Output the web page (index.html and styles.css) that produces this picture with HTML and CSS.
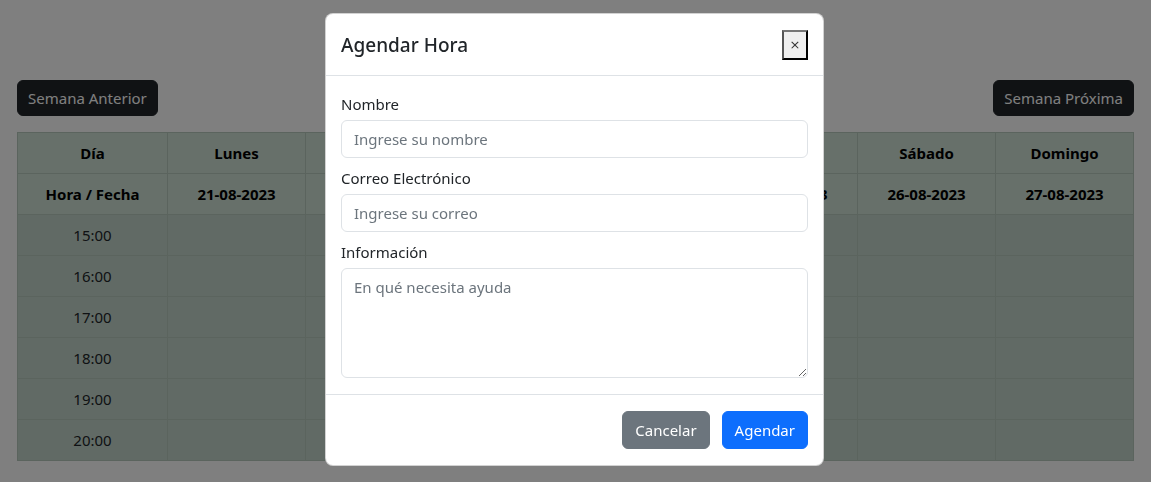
FILE: index.html
```html
<!DOCTYPE html>
<html lang="es">
<head>
<meta charset="utf-8">
<title>Agendar Hora</title>
<link rel="stylesheet" href="styles.css">
</head>
<body>
<div class="page">
  <div class="nav">
    <button class="btn-dark">Semana Anterior</button>
    <button class="btn-dark">Semana Próxima</button>
  </div>
  <table class="agenda">
    <thead>
      <tr><th class="first">Día</th><th>Lunes</th><th>Martes</th><th>Miércoles</th><th>Jueves</th><th>Viernes</th><th>Sábado</th><th>Domingo</th></tr>
      <tr><th class="first">Hora / Fecha</th><th>21-08-2023</th><th>22-08-2023</th><th>23-08-2023</th><th>24-08-2023</th><th>25-08-2023</th><th>26-08-2023</th><th>27-08-2023</th></tr>
    </thead>
    <tbody>
      <tr><td>15:00</td><td></td><td></td><td></td><td></td><td></td><td></td><td></td></tr>
      <tr><td>16:00</td><td></td><td></td><td></td><td></td><td></td><td></td><td></td></tr>
      <tr><td>17:00</td><td></td><td></td><td></td><td></td><td></td><td></td><td></td></tr>
      <tr><td>18:00</td><td></td><td></td><td></td><td></td><td></td><td></td><td></td></tr>
      <tr><td>19:00</td><td></td><td></td><td></td><td></td><td></td><td></td><td></td></tr>
      <tr><td>20:00</td><td></td><td></td><td></td><td></td><td></td><td></td><td></td></tr>
    </tbody>
  </table>
</div>

<div class="backdrop"></div>

<div class="modal-wrap">
  <div class="modal">
    <div class="modal-header">
      <h5 class="modal-title">Agendar Hora</h5>
      <button class="close">×</button>
    </div>
    <div class="modal-body">
      <label class="lbl">Nombre</label>
      <input class="field" type="text" placeholder="Ingrese su nombre">
      <label class="lbl">Correo Electrónico</label>
      <input class="field" type="email" placeholder="Ingrese su correo">
      <label class="lbl">Información</label>
      <textarea class="field area" rows="4" placeholder="En qué necesita ayuda"></textarea>
    </div>
    <div class="modal-footer">
      <button class="btn btn-secondary">Cancelar</button>
      <button class="btn btn-primary">Agendar</button>
    </div>
  </div>
</div>
</body>
</html>
```

FILE: styles.css
```css
* { box-sizing: border-box; }
html, body { margin: 0; padding: 0; }
body {
  font-family: "Noto Sans", "Open Sans", "DejaVu Sans", sans-serif;
  font-size: 15px;
  line-height: 24px;
  color: #212529;
  background: #fff;
  height: 482px;
  overflow: hidden;
}
.page {
  padding: 80px 17px 0 17px;
}
.nav {
  display: flex;
  justify-content: space-between;
  margin-bottom: 16px;
}
.btn-dark {
  font: inherit;
  background: #212529;
  color: #fff;
  border: 1px solid #212529;
  border-radius: 6px;
  padding: 5px 10px;
  height: 36px;
  line-height: 24px;
}
.agenda {
  width: 100%;
  border-collapse: collapse;
  table-layout: fixed;
}
.agenda th, .agenda td {
  border: 1px solid #b6c9bd;
  text-align: center;
  padding: 8px;
  height: 41px;
  color: #000;
}
.agenda th { background: #cfe1d4; font-weight: 700; }
.agenda td { background: #c3d5cb; color: #212529; }
.agenda th.first { width: 150px; }

.backdrop {
  position: fixed;
  inset: 0;
  background: rgba(0, 0, 0, 0.5);
}
.modal-wrap {
  position: fixed;
  top: 13px;
  left: 0;
  right: 0;
  display: flex;
  justify-content: center;
}
.modal {
  width: 499px;
  margin-left: -2px;
  background: #fff;
  border: 1px solid rgba(0,0,0,.175);
  border-radius: 8px;
  display: flex;
  flex-direction: column;
}
.modal-header {
  display: flex;
  align-items: center;
  justify-content: space-between;
  padding: 16px 15px 16px 15px;
  border-bottom: 1px solid #dee2e6;
  height: 62px;
}
.modal-title {
  margin: 0;
  font-size: 19px;
  font-weight: 500;
  line-height: 30px;
}
.close {
  width: 26px;
  height: 30px;
  padding: 0;
  background: #efefef;
  border: 2px outset #767676;
  border-top-color: #222;
  border-left-color: #555;
  border-right-color: #111;
  border-bottom-color: #111;
  font-size: 13px;
  color: #333;
  font-family: "DejaVu Sans", sans-serif;
  line-height: 1;
}
.modal-body {
  padding: 16px 15px;
  display: flex;
  flex-direction: column;
}
.lbl {
  display: block;
  line-height: 24px;
  margin-bottom: 4px;
}
.field {
  font: inherit;
  display: block;
  width: 100%;
  height: 38px;
  padding: 6px 12px;
  border: 1px solid #dee2e6;
  border-radius: 6px;
  color: #212529;
  margin-bottom: 8px;
  line-height: 24px;
}
.field::placeholder { color: #6c757d; }
.area {
  height: 110px;
  margin-bottom: 0;
  resize: vertical;
}
.modal-footer {
  border-top: 1px solid #dee2e6;
  padding: 12px 11px 12px 12px;
  display: flex;
  justify-content: flex-end;
  gap: 8px;
}
.btn {
  font: inherit;
  font-size: 15px;
  height: 38px;
  padding: 6px 12px;
  border-radius: 6px;
  border: 1px solid transparent;
  color: #fff;
  margin: 4px 4px 4px 0;
}
.btn-secondary { background: #6c757d; border-color: #6c757d; }
.btn-primary { background: #0d6efd; border-color: #0d6efd; }
```
